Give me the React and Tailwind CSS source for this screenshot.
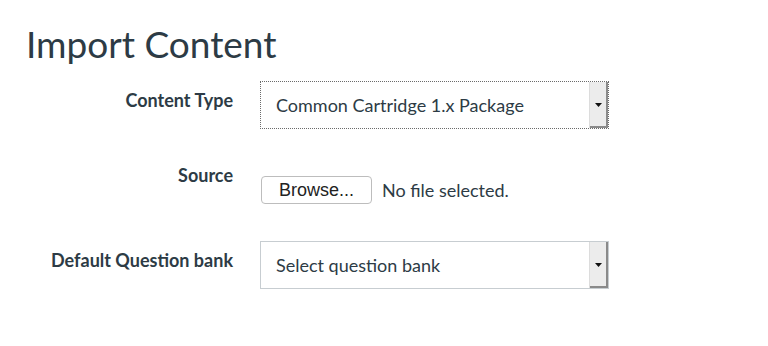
function SelectBox({ label, focused }) {
  return (
    <div
      className={`flex h-[48px] w-[349px] items-stretch bg-white ${
        focused ? 'border border-dotted border-[#6b6b6b]' : 'border border-[#c7cdd1]'
      }`}
    >
      <div className="flex flex-1 items-center pl-[15px] text-[18px] text-[#2d3b45]">{label}</div>
      <div className="flex w-[19px] items-center justify-center border-l border-[#dcdcdc] bg-[#ececec] shadow-[inset_-2px_-2px_0_#8a8a8a]">
        <svg width="7" height="4" viewBox="0 0 7 4" className="mb-[1px] mr-[2px]">
          <path d="M0 0h7L3.5 4z" fill="#111" />
        </svg>
      </div>
    </div>
  );
}

export default function App() {
  return (
    <div className="h-[346px] w-[768px] bg-white font-['Lato',sans-serif] text-[#2d3b45]">
      <h1 className="pl-[26px] pt-[20px] text-[37px] leading-[48px] font-normal">Import Content</h1>

      <div className="mt-[13px] flex flex-col">
        <div className="flex items-start">
          <div className="w-[233px] pt-[7px] text-right text-[18px] font-bold leading-[24px]">Content Type</div>
          <div className="ml-[27px]">
            <SelectBox label="Common Cartridge 1.x Package" focused />
          </div>
        </div>

        <div className="mt-[34px] flex items-start">
          <div className="w-[233px] text-right text-[18px] font-bold leading-[24px]">Source</div>
          <div className="ml-[28px] mt-[13px] flex items-center gap-[10px]">
            <button className="h-[28px] w-[111px] rounded-[4px] border border-[#bdbdbd] bg-white font-['Liberation_Sans',sans-serif] text-[18px] leading-none text-[#222]">
              Browse...
            </button>
            <span className="text-[18px] text-[#2d3b45]">No file selected.</span>
          </div>
        </div>

        <div className="mt-[37px] flex items-start">
          <div className="w-[233px] pt-[7px] text-right text-[18px] font-bold leading-[24px]">Default Question bank</div>
          <div className="ml-[27px]">
            <SelectBox label="Select question bank" />
          </div>
        </div>
      </div>
    </div>
  );
}
